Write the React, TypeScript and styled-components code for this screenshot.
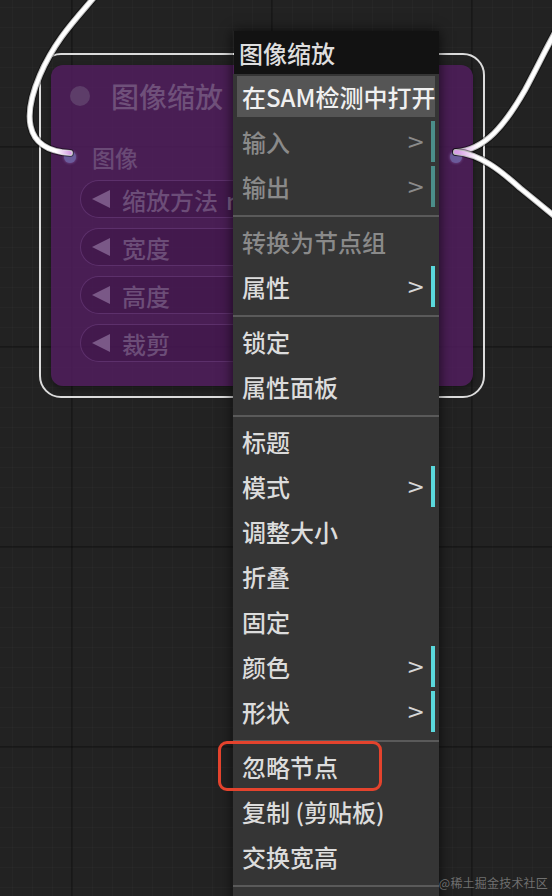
import React from "react";
import styled, { createGlobalStyle } from "styled-components";

const GlobalStyle = createGlobalStyle`
  html, body { margin: 0; padding: 0; background: #222; overflow: hidden; }
  * { box-sizing: border-box; }
`;

const FONT = `"Noto Sans CJK SC", "Noto Sans", sans-serif`;

const Canvas = styled.div`
  position: relative;
  width: 552px;
  height: 896px;
  overflow: hidden;
  font-family: ${FONT};
  background-color: #222222;
  background-image:
    linear-gradient(to right, rgba(0, 0, 0, 0.3) 2px, transparent 2px),
    linear-gradient(to bottom, rgba(0, 0, 0, 0.3) 2px, transparent 2px),
    linear-gradient(to right, rgba(255, 255, 255, 0.02) 1px, transparent 1px),
    linear-gradient(to bottom, rgba(255, 255, 255, 0.02) 1px, transparent 1px);
  background-size: 200px 200px, 200px 200px, 20px 20px, 20px 20px;
  background-position: 71px 146px, 71px 146px, 12px 7px, 12px 7px;
`;

/* ---------- graph node ---------- */

const NodeFrame = styled.div`
  position: absolute;
  left: 39px;
  top: 53px;
  width: 446px;
  height: 345px;
  border: 2px solid #dcdcdc;
  border-radius: 22px;
  padding: 10px;
`;

const NodeBody = styled.div`
  width: 100%;
  height: 100%;
  border-radius: 12px;
  background: rgba(84, 30, 98, 0.8);
  display: flex;
  flex-direction: column;
  box-shadow: 0 3px 6px rgba(0, 0, 0, 0.35);
`;

const NodeTitle = styled.div`
  height: 62px;
  display: flex;
  align-items: center;
  gap: 21px;
  padding-left: 19px;
  color: #6f507a;
  font-size: 28px;
  font-weight: 500;
`;

const TitleDot = styled.span`
  width: 20px;
  height: 20px;
  border-radius: 50%;
  background: #5d3d69;
`;

const SlotRow = styled.div`
  height: 30px;
  margin-top: 15px;
  display: flex;
  align-items: center;
  padding: 0 11px 0 13px;
  color: #6a4a76;
  font-size: 23px;
  font-weight: 500;
`;

const SlotDot = styled.span`
  width: 12px;
  height: 12px;
  border-radius: 50%;
  background: #6b5c9c;
  box-shadow: 0 0 3px rgba(170, 140, 220, 0.6);
`;

const SlotLabel = styled.span`
  margin-left: 16px;
  flex: 1;
`;

const Widgets = styled.div`
  margin: 8px 40px 0 29px;
  display: flex;
  flex-direction: column;
  gap: 10px;
`;

const Widget = styled.div`
  height: 38px;
  border-radius: 19px;
  border: 1px solid rgba(125, 75, 145, 0.45);
  background: rgba(45, 10, 55, 0.22);
  display: flex;
  align-items: center;
  padding: 0 16px 0 11px;
  gap: 12px;
  color: #6c4d78;
  font-size: 24px;
  font-weight: 500;
`;

const Arrow = styled.span`
  width: 0;
  height: 0;
  border-top: 9px solid transparent;
  border-bottom: 9px solid transparent;
  border-right: 18px solid #7a5887;
`;

const WidgetValue = styled.span<{ $lead?: boolean }>`
  margin-left: ${(p) => (p.$lead ? "-4px" : "auto")};
  color: #7b5f86;
`;

/* ---------- links ---------- */

const LinkLayer = styled.svg`
  position: absolute;
  left: 0;
  top: 0;
  width: 552px;
  height: 896px;
  pointer-events: none;
`;

/* ---------- context menu ---------- */

const Menu = styled.div`
  position: absolute;
  left: 233px;
  top: 31px;
  width: 206px;
  box-shadow: 0 0 12px rgba(0, 0, 0, 0.7);
`;

const MenuTitle = styled.div`
  height: 43px;
  background: #121212;
  color: #dedede;
  font-size: 24px;
  font-weight: 500;
  display: flex;
  align-items: center;
  padding-left: 5px;
  margin-left: 1px;
`;

const MenuBody = styled.div`
  background: #353535;
  padding: 2px 4px 0;
  display: flex;
  flex-direction: column;
`;

const Item = styled.div<{ $disabled?: boolean; $active?: boolean; $sub?: boolean }>`
  height: 41px;
  margin-bottom: 4px;
  display: flex;
  align-items: center;
  justify-content: space-between;
  padding: 0 6px 0 5px;
  font-size: 24px;
  font-weight: 500;
  white-space: nowrap;
  color: ${(p) => (p.$active ? "#f0f0f0" : p.$disabled ? "#8a8a8a" : "#dcdcdc")};
  background: ${(p) => (p.$active ? "#555555" : "transparent")};
  border-right: 4px solid
    ${(p) => (!p.$sub ? "transparent" : p.$disabled ? "#4b8e8a" : "#5ad8dc")};
`;

const Chevron = styled.span<{ $disabled?: boolean }>`
  font-size: 22px;
  color: ${(p) => (p.$disabled ? "#8a8a8a" : "#d6d6d6")};
  font-family: "DejaVu Sans", sans-serif;
`;

const Separator = styled.div`
  height: 2px;
  margin: 4px -4px 4px;
  background: #5a5a5a;
`;

const Annotation = styled.div`
  position: absolute;
  left: 218px;
  top: 741px;
  width: 164px;
  height: 50px;
  border: 3px solid #e4432d;
  border-radius: 9px;
`;

const Watermark = styled.div`
  position: absolute;
  right: 4px;
  bottom: 5px;
  font-size: 12px;
  color: rgba(190, 190, 190, 0.5);
  letter-spacing: 0.2px;
`;

type Entry =
  | { sep: true }
  | { label: string; disabled?: boolean; sub?: boolean; active?: boolean };

const entries: Entry[] = [
  { label: "在SAM检测中打开", active: true },
  { label: "输入", disabled: true, sub: true },
  { label: "输出", disabled: true, sub: true },
  { sep: true },
  { label: "转换为节点组", disabled: true },
  { label: "属性", sub: true },
  { sep: true },
  { label: "锁定" },
  { label: "属性面板" },
  { sep: true },
  { label: "标题" },
  { label: "模式", sub: true },
  { label: "调整大小" },
  { label: "折叠" },
  { label: "固定" },
  { label: "颜色", sub: true },
  { label: "形状", sub: true },
  { sep: true },
  { label: "忽略节点" },
  { label: "复制 (剪贴板)" },
  { label: "交换宽高" },
  { sep: true },
  { label: "移除" },
];

const widgets = [
  { label: "缩放方法", value: "nearest-exact", lead: true },
  { label: "宽度", value: "512" },
  { label: "高度", value: "512" },
  { label: "裁剪", value: "disabled" },
];

const LEFT = "M70 153 C20 150, 25 110, 40 75 C55 40, 75 20, 97 -6";
const LEFT_END = "M70 153 Q63 152.3 56.6 151";
const UP = "M456 152 C485 150, 505 125, 525 90 C540 62, 550 40, 565 15";
const DOWN = "M456 152 C480 154, 500 170, 520 188 C535 200, 550 213, 572 230";

function Links() {
  return (
    <LinkLayer viewBox="0 0 552 896">
      <defs>
        <linearGradient id="gl" gradientUnits="userSpaceOnUse" x1="70" y1="153" x2="56" y2="153">
          <stop offset="0" stopColor="#d7a0e6" />
          <stop offset="1" stopColor="#ffffff" />
        </linearGradient>
        <linearGradient id="gr" gradientUnits="userSpaceOnUse" x1="458" y1="152" x2="478" y2="152">
          <stop offset="0" stopColor="#d7a0e6" />
          <stop offset="1" stopColor="#ffffff" />
        </linearGradient>
      </defs>
      <g fill="none" strokeLinecap="round">
        <path d={LEFT} stroke="rgba(0,0,0,0.45)" strokeWidth="8" />
        <path d={LEFT} stroke="#bdbdbd" strokeWidth="6" />
        <path d={LEFT} stroke="#ffffff" strokeWidth="4" />
        <path d={LEFT_END} stroke="url(#gl)" strokeWidth="4" />
        <path d={UP} stroke="rgba(0,0,0,0.45)" strokeWidth="8" />
        <path d={UP} stroke="#bdbdbd" strokeWidth="6" />
        <path d={UP} stroke="url(#gr)" strokeWidth="4" />
        <path d={DOWN} stroke="rgba(0,0,0,0.45)" strokeWidth="8" />
        <path d={DOWN} stroke="#bdbdbd" strokeWidth="6" />
        <path d={DOWN} stroke="url(#gr)" strokeWidth="4" />
      </g>
    </LinkLayer>
  );
}

export default function App() {
  return (
    <>
      <GlobalStyle />
      <Canvas>
        <NodeFrame>
          <NodeBody>
            <NodeTitle>
              <TitleDot />
              <span>图像缩放</span>
            </NodeTitle>
            <SlotRow>
              <SlotDot />
              <SlotLabel>图像</SlotLabel>
              <SlotDot />
            </SlotRow>
            <Widgets>
              {widgets.map((w) => (
                <Widget key={w.label}>
                  <Arrow />
                  <span>{w.label}</span>
                  <WidgetValue $lead={w.lead}>{w.value}</WidgetValue>
                </Widget>
              ))}
            </Widgets>
          </NodeBody>
        </NodeFrame>
        <Links />
        <Menu>
          <MenuTitle>图像缩放</MenuTitle>
          <MenuBody>
            {entries.map((e, i) =>
              "sep" in e ? (
                <Separator key={i} />
              ) : (
                <Item key={i} $disabled={e.disabled} $active={e.active} $sub={e.sub}>
                  <span>{e.label}</span>
                  {e.sub && <Chevron $disabled={e.disabled}>&gt;</Chevron>}
                </Item>
              )
            )}
          </MenuBody>
        </Menu>
        <Annotation />
        <Watermark>@稀土掘金技术社区</Watermark>
      </Canvas>
    </>
  );
}
